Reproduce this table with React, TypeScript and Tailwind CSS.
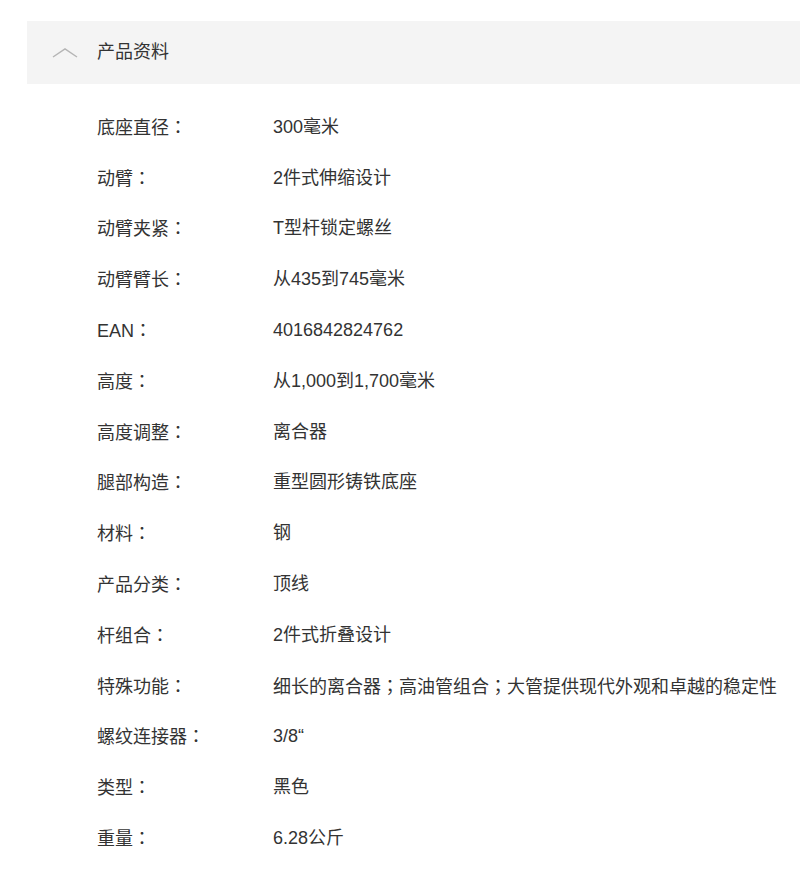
import React from 'react';

const specs: [string, string][] = [
  ['底座直径：', '300毫米'],
  ['动臂：', '2件式伸缩设计'],
  ['动臂夹紧：', 'T型杆锁定螺丝'],
  ['动臂臂长：', '从435到745毫米'],
  ['EAN：', '4016842824762'],
  ['高度：', '从1,000到1,700毫米'],
  ['高度调整：', '离合器'],
  ['腿部构造：', '重型圆形铸铁底座'],
  ['材料：', '钢'],
  ['产品分类：', '顶线'],
  ['杆组合：', '2件式折叠设计'],
  ['特殊功能：', '细长的离合器；高油管组合；大管提供现代外观和卓越的稳定性'],
  ['螺纹连接器：', '3/8“'],
  ['类型：', '黑色'],
  ['重量：', '6.28公斤'],
];

// full-width punctuation sits centred in its cell in the reference
function Punct({ text }: { text: string }) {
  const parts = text.split(/([：；])/);
  return (
    <>
      {parts.map((p, i) =>
        p === '：' || p === '；' ? (
          <span key={i} style={{ fontFamily: '"Noto Sans CJK TC", sans-serif' }}>
            {p}
          </span>
        ) : (
          <React.Fragment key={i}>{p}</React.Fragment>
        )
      )}
    </>
  );
}

export default function App() {
  return (
    <div
      className="min-h-screen bg-white pt-[21px] pl-[27px] text-[#333]"
      style={{ fontFamily: '"Liberation Sans", "Noto Sans CJK SC", sans-serif' }}
    >
      {/* Header */}
      <div className="flex h-[63px] items-center bg-[#f4f4f4]">
        <svg width="26" height="10" viewBox="0 0 26 10" className="ml-[25px]" fill="none">
          <polyline points="1,9 13,1 25,9" stroke="#b5b5b5" strokeWidth="1.5" />
        </svg>
        <span className="ml-[19px] text-[18px] text-[#333]">产品资料</span>
      </div>

      {/* Spec list */}
      <div className="pt-[18px]">
        {specs.map(([label, value]) => (
          <div key={label} className="flex h-[50.8px] items-center text-[18px]">
            <span className="ml-[70px] w-[176px] shrink-0">
              <Punct text={label} />
            </span>
            <span className="whitespace-nowrap">
              <Punct text={value} />
            </span>
          </div>
        ))}
      </div>
    </div>
  );
}
